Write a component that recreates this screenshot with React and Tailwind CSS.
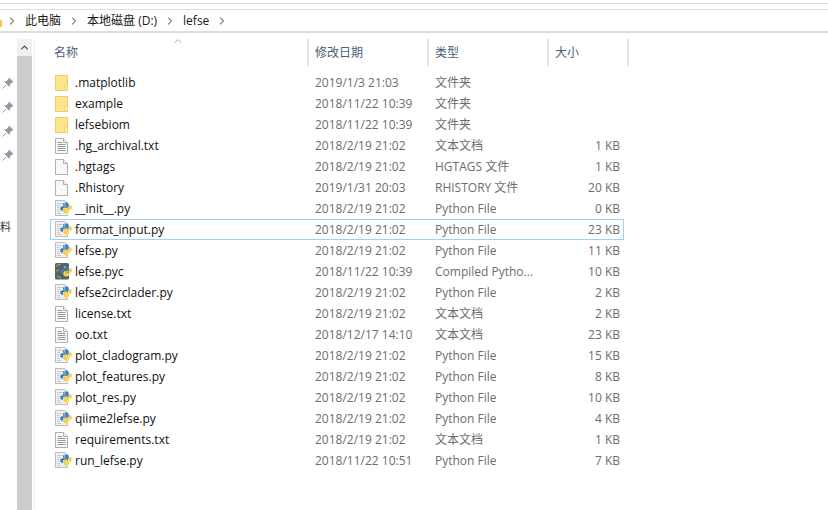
import React from "react";
import { ChevronRight, ChevronUp } from "lucide-react";

const FONT = "[font-family:'Open_Sans','Noto_Sans_CJK_SC',sans-serif]";

const files = [
  { name: ".matplotlib", date: "2019/1/3 21:03", type: "文件夹", size: "", icon: "folder" },
  { name: "example", date: "2018/11/22 10:39", type: "文件夹", size: "", icon: "folder" },
  { name: "lefsebiom", date: "2018/11/22 10:39", type: "文件夹", size: "", icon: "folder" },
  { name: ".hg_archival.txt", date: "2018/2/19 21:02", type: "文本文档", size: "1 KB", icon: "txt" },
  { name: ".hgtags", date: "2018/2/19 21:02", type: "HGTAGS 文件", size: "1 KB", icon: "blank" },
  { name: ".Rhistory", date: "2019/1/31 20:03", type: "RHISTORY 文件", size: "20 KB", icon: "blank" },
  { name: "__init__.py", date: "2018/2/19 21:02", type: "Python File", size: "0 KB", icon: "py" },
  { name: "format_input.py", date: "2018/2/19 21:02", type: "Python File", size: "23 KB", icon: "py", selected: true },
  { name: "lefse.py", date: "2018/2/19 21:02", type: "Python File", size: "11 KB", icon: "py" },
  { name: "lefse.pyc", date: "2018/11/22 10:39", type: "Compiled Pytho...", size: "10 KB", icon: "pyc" },
  { name: "lefse2circlader.py", date: "2018/2/19 21:02", type: "Python File", size: "2 KB", icon: "py" },
  { name: "license.txt", date: "2018/2/19 21:02", type: "文本文档", size: "2 KB", icon: "txt" },
  { name: "oo.txt", date: "2018/12/17 14:10", type: "文本文档", size: "23 KB", icon: "txt" },
  { name: "plot_cladogram.py", date: "2018/2/19 21:02", type: "Python File", size: "15 KB", icon: "py" },
  { name: "plot_features.py", date: "2018/2/19 21:02", type: "Python File", size: "8 KB", icon: "py" },
  { name: "plot_res.py", date: "2018/2/19 21:02", type: "Python File", size: "10 KB", icon: "py" },
  { name: "qiime2lefse.py", date: "2018/2/19 21:02", type: "Python File", size: "4 KB", icon: "py" },
  { name: "requirements.txt", date: "2018/2/19 21:02", type: "文本文档", size: "1 KB", icon: "txt" },
  { name: "run_lefse.py", date: "2018/11/22 10:51", type: "Python File", size: "7 KB", icon: "py" },
];

const FolderIcon = () => (
  <svg width="14" height="16" viewBox="0 0 14 16">
    <rect x="0.5" y="0.5" width="12" height="15" fill="#fde58f" stroke="#f0cf62" />
    <rect x="10" y="10" width="2.5" height="5.5" fill="#fff3c0" stroke="#e8c65a" strokeWidth="0.7" />
  </svg>
);

const PageIcon = ({ lines }) => (
  <svg width="13" height="16" viewBox="0 0 13 16">
    <path d="M0.5 0.5H8.5L12.5 4.5V15.5H0.5Z" fill="#f8f8f8" stroke="#b0b0b0" />
    <path d="M8.5 0.5V4.5H12.5" fill="#eee" stroke="#b0b0b0" />
    {lines &&
      [6, 8, 10, 12].map((y) => (
        <path key={y} d={`M2.5 ${y + 0.5}H10.5`} stroke="#9a9a9a" />
      ))}
    {lines && <path d="M2.5 4.5H7" stroke="#9a9a9a" />}
  </svg>
);

// the two snakes, drawn on a 14 box and moved to the lower right of the page
const PySnake = () => (
  <g transform="translate(5.2 2.6) scale(0.8)">
    <path d="M7 0C4.5 0 3.5 1 3.5 2.5V4H7.5V4.7H2.3C0.7 4.7 0 6 0 7.5C0 9.1 0.8 10.1 2.1 10.1H3.5V8.3C3.5 7.1 4.4 6.4 5.5 6.4H8.9C10 6.4 10.7 5.6 10.7 4.5V2.5C10.7 0.8 9.3 0 7 0Z" fill="#3f7fb5" />
    <path d="M7.7 13.5C10.2 13.5 11.2 12.5 11.2 11V9.5H7.2V8.8H12.4C14 8.8 14.5 7.5 14.5 6C14.5 4.4 13.9 3.4 12.6 3.4H11.2V5.2C11.2 6.4 10.3 7.1 9.2 7.1H5.8C4.7 7.1 4 7.9 4 9V11C4 12.7 5.4 13.5 7.7 13.5Z" fill="#f7cf45" />
    <rect x="4.9" y="1.1" width="1.3" height="1.3" fill="#fff" />
    <rect x="8.4" y="11.2" width="1.3" height="1.3" fill="#fff" />
  </g>
);

const PyIcon = () => (
  <svg width="17" height="17" viewBox="0 0 17 17">
    <path d="M0.5 0.5H10L12.5 3V15.5H0.5Z" fill="#f1f1f1" stroke="#bcbcbc" />
    <path d="M2 3.5H8M2 5.5H5M2 7.5H4.5M2 9.5H4M2 11.5H5M2 13.5H6" stroke="#cacaca" />
    <PySnake />
  </svg>
);

const PycIcon = () => (
  <svg width="17" height="17" viewBox="0 0 17 17">
    <rect x="0" y="0" width="14" height="16.5" rx="1.5" fill="#56635a" />
    <path d="M1 3L6 1M1 8L4 7M2 13L6 15" stroke="#87937f" strokeWidth="1.5" />
    <PySnake />
  </svg>
);

const PinIcon = () => (
  <svg width="12" height="12" viewBox="0 0 12 12">
    <path d="M7 0.5L11.5 5L10 5.5L8 7.5L7.5 10L2 4.5L4.5 4L6.5 2Z" fill="#8f9aa6" />
    <path d="M4 8L0.5 11.5" stroke="#8f9aa6" />
  </svg>
);

const FileIcon = ({ kind }) => {
  if (kind === "folder") return <FolderIcon />;
  if (kind === "txt") return <PageIcon lines />;
  if (kind === "blank") return <PageIcon />;
  if (kind === "pyc") return <PycIcon />;
  return <PyIcon />;
};

const Crumb = ({ children }) => (
  <>
    <span>{children}</span>
    <ChevronRight size={12} strokeWidth={2.5} className="text-[#8a8a8a]" />
  </>
);

const HeaderCell = ({ label, className }) => (
  <div className={`flex items-center h-[27px] border-l-2 border-[#e5e5e5] pl-[6px] ${className}`}>
    {label}
  </div>
);

export default function App() {
  return (
    <div className={`w-[828px] h-[510px] overflow-hidden bg-white text-[12px] flex flex-col ${FONT}`}>
      <div className="h-[3px]" />
      <div className="h-[6px] border-t border-[#d9d9d9]" />

      {/* Address bar */}
      <div className="h-[24px] border-t border-b-2 border-t-[#dcdcdc] border-b-[#dddddd] flex items-center text-[#1a1a1a]">
        <div className="w-[2px] h-[7px] bg-[#f5c84c] mt-[6px]" />
        <div className="flex items-center ml-[4px] gap-[7px]">
          <ChevronRight size={12} strokeWidth={2.5} className="text-[#8a8a8a]" />
          <Crumb>此电脑</Crumb>
          <Crumb>本地磁盘 (D:)</Crumb>
          <Crumb>lefse</Crumb>
        </div>
      </div>

      <div className="flex flex-1 min-h-0 pt-[6px]">
        {/* Nav pane */}
        <div className="w-[17px] flex flex-col items-start pl-[2px] pt-[38px] gap-[12px]">
          <PinIcon />
          <PinIcon />
          <PinIcon />
          <PinIcon />
          <div className="mt-[46px] -ml-[2px] text-[11px] text-[#333]">料</div>
        </div>

        {/* Scrollbar */}
        <div className="w-[15px] flex flex-col bg-[#cdcdcd]">
          <div className="h-[17px] bg-[#f0f0f0] flex items-center justify-center">
            <ChevronUp size={11} strokeWidth={3} className="text-[#505050]" />
          </div>
        </div>
        <div className="w-[3px] border-r border-[#eeeeee]" />

        {/* File list */}
        <div className="flex-1 flex flex-col pl-[16px] min-w-0">
          <div className="flex h-[27px] text-[#4c607a] relative">
            <div className="w-[256px] flex items-center pl-[3px]">名称</div>
            <ChevronUp size={12} strokeWidth={1.5} className="absolute left-[121px] -top-[4px] text-[#8a8a8a]" />
            <HeaderCell label="修改日期" className="w-[120px]" />
            <HeaderCell label="类型" className="w-[120px]" />
            <HeaderCell label="大小" className="w-[82px] border-r-2 border-r-[#e5e5e5]" />
          </div>
          <div className="flex flex-col pt-[6px]">
            {files.map((f) => (
              <div
                key={f.name}
                className={`flex items-center h-[21px] w-[574px] -ml-[1px] border ${
                  f.selected ? "border-[#99d1ff]" : "border-transparent"
                }`}
              >
                <div className="w-[258px] flex items-center text-[#111]">
                  <div className="w-[24px] pl-[4px] flex items-center">
                    <FileIcon kind={f.icon} />
                  </div>
                  <span>{f.name}</span>
                </div>
                <div className="w-[120px] text-[#6d6d6d] pl-[6px] whitespace-nowrap">{f.date}</div>
                <div className="w-[114px] text-[#6d6d6d] pl-[6px] whitespace-nowrap">{f.type}</div>
                <div className="w-[77px] text-[#6d6d6d] text-right">{f.size}</div>
              </div>
            ))}
          </div>
        </div>
      </div>
    </div>
  );
}
